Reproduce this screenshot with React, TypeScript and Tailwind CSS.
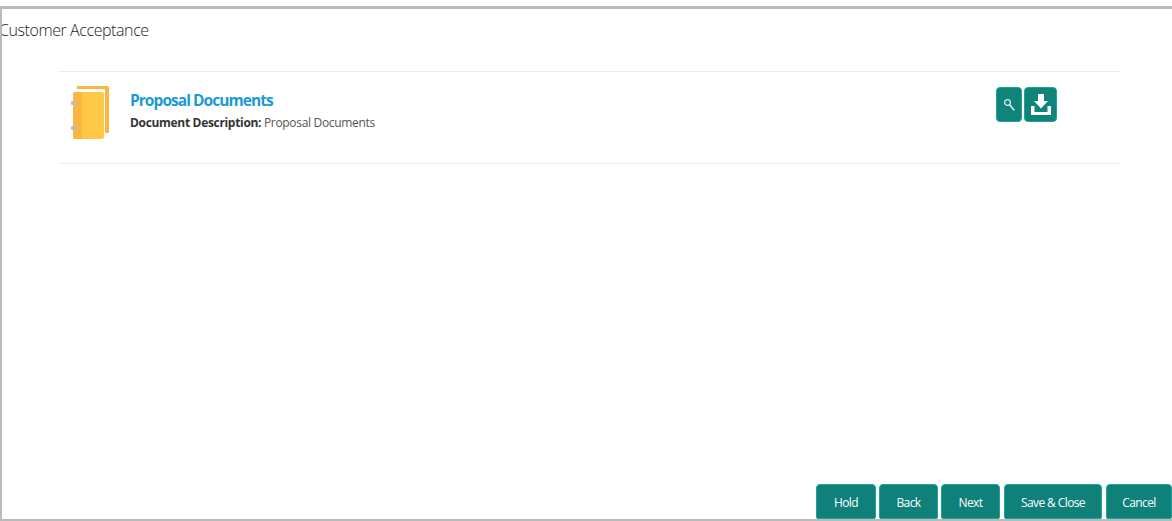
export default function App() {
  const buttons = [
    { label: "Hold", c: "w-[60px]" },
    { label: "Back", c: "ml-[3px] w-[59px]" },
    { label: "Next", c: "ml-[3px] w-[59px]" },
    { label: "Save & Close", c: "ml-[4px] w-[98px]" },
    { label: "Cancel", c: "ml-[4px] w-[66px]" },
  ];
  return (
    <div className="h-[521px] w-[1172px] overflow-hidden bg-white pt-1.5 font-['Open_Sans',sans-serif]">
      <div className="flex h-[515px] flex-col overflow-hidden border-t-[3px] border-b-2 border-l-2 border-[#b9babb]">
        <h1 className="h-[40px] pt-[9px] -ml-[3px] whitespace-nowrap text-[16px] leading-[24px] font-light tracking-[-0.42px] text-[#222]">
          Customer Acceptance
        </h1>
        <div className="ml-[56px] mt-[22px] flex h-[93px] w-[1061px] items-start border-y border-[#ebeded]">
          <div className="ml-[13px] mt-[14px] h-[54px] w-[40px] shrink-0">
            <svg width="40" height="54" viewBox="0 0 40 54">
              <path d="M6 0h30a2 2 0 0 1 2 2v45h-4V4a1 1 0 0 0-1-1H6z" fill="#fdb541" />
              <path d="M4 6h27a2 2 0 0 1 2 2v43a2 2 0 0 1-2 2H4a2 2 0 0 1-2-2V8a2 2 0 0 1 2-2z" fill="#fec844" />
              <path d="M4 6h7v47H4a2 2 0 0 1-2-2V8a2 2 0 0 1 2-2z" fill="#fdb541" />
              <rect x="0" y="15" width="6" height="4" rx="1" fill="#bdbdbd" />
              <rect x="0" y="40" width="6" height="4" rx="1" fill="#bdbdbd" />
            </svg>
          </div>
          <div className="ml-[19px] mt-[17px] w-[866px] shrink-0">
            <div className="whitespace-nowrap text-[15.5px] leading-[22px] font-bold tracking-[-0.95px] text-[#1b9ad6]">Proposal Documents</div>
            <div className="mt-[4px] whitespace-nowrap text-[12px] leading-[16px] tracking-[-0.32px] text-[#555]">
              <span className="font-bold text-[#333]">Document Description: </span>Proposal Documents
            </div>
          </div>
          <div className="mt-[15px] flex gap-[2px]">
            <button className="flex h-[35px] w-[26px] items-center justify-center rounded-[4px] border border-[#1ea396] bg-[#10847a]">
              <svg width="14" height="14" viewBox="0 0 14 14" fill="none" stroke="#dff3f0" strokeLinecap="round">
                <circle cx="5.500" cy="4.500" r="2.900" strokeWidth="1.200" />
                <path d="M7.800 7L12 12" strokeWidth="1.500" />
              </svg>
            </button>
            <button className="flex h-[35px] w-[33px] items-center justify-center rounded-[4px] border border-[#1ea396] bg-[#10847a]">
              <svg width="20" height="21" viewBox="0 0 20 21" fill="#fff">
                <path d="M7 0h6v7h4l-7 7.500L3 7h4z" />
                <path d="M0 12h3.500v6h13v-6H20v9H0z" />
              </svg>
            </button>
          </div>
        </div>
        <div className="mt-auto flex justify-end">
          {buttons.map((b) => (
            <button
              key={b.label}
              className={`${b.c} h-[35px] rounded-t-[4px] rounded-b-[2px] border border-[#1ea396] bg-[#10807a] pt-[3px] text-[12px] tracking-[-0.6px] text-white`}
            >
              {b.label}
            </button>
          ))}
        </div>
      </div>
    </div>
  );
}
